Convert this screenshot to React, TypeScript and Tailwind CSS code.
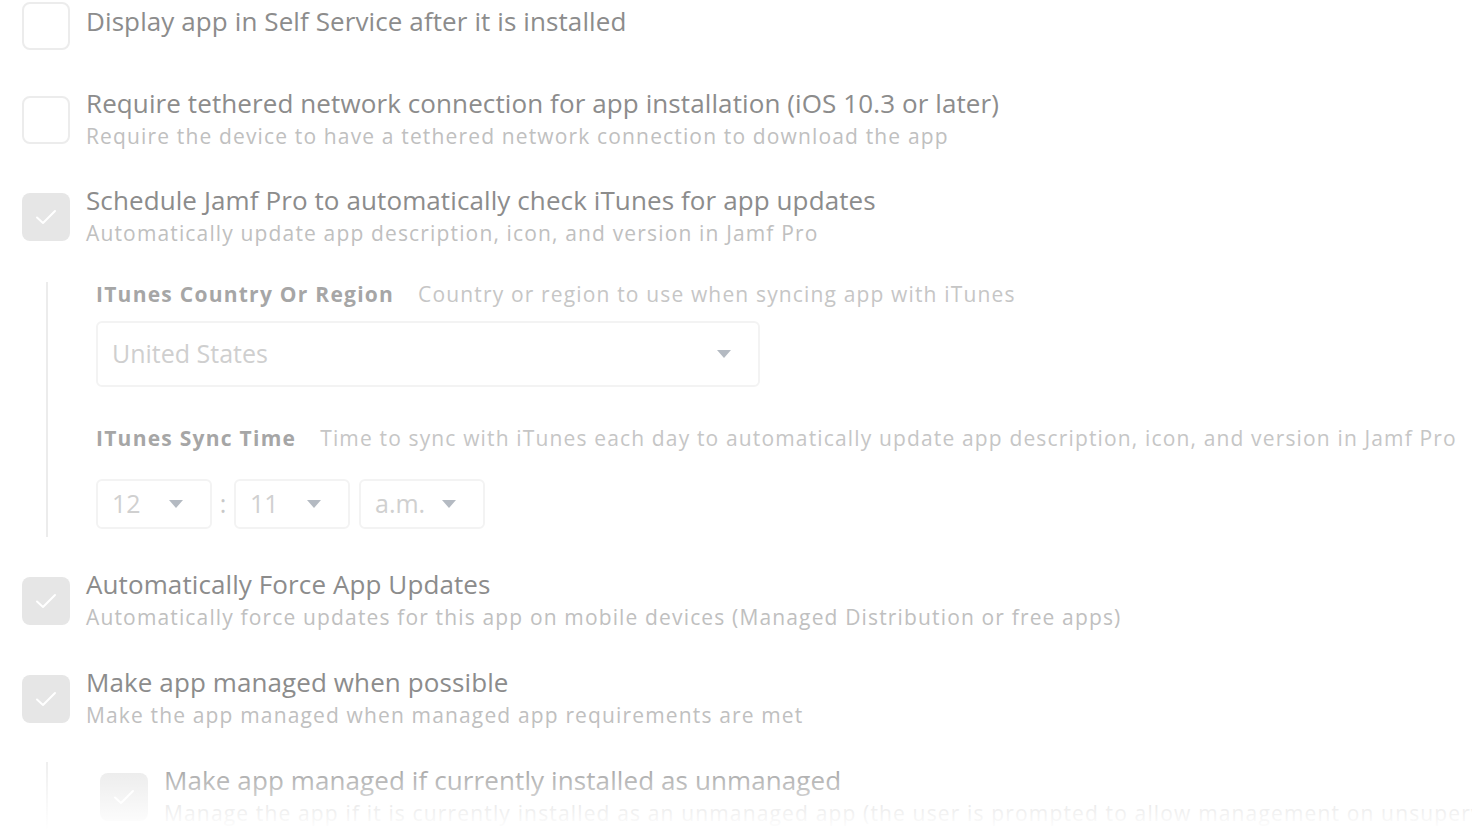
import React from 'react';

const font = { fontFamily: '"Open Sans", "Noto Sans", sans-serif' };

const Check: React.FC<{ checked?: boolean }> = ({ checked }) => (
    <div
        className={`w-12 h-12 shrink-0 rounded-lg flex items-center justify-center ${
            checked ? 'bg-[#e6e6e6]' : 'border-2 border-[#ececec] bg-white'
        }`}
    >
        {checked && (
            <svg width="22" height="16" viewBox="0 0 22 16" fill="none">
                <path d="M2 8.5 L8 14 L20 2" stroke="#ffffff" strokeWidth="2" strokeLinecap="round" strokeLinejoin="round" />
            </svg>
        )}
    </div>
);

const Option: React.FC<{ title: string; desc?: string; checked?: boolean; className?: string; textClass?: string }> = ({
    title,
    desc,
    checked,
    className,
    textClass,
}) => (
    <div className={`flex gap-4 ${className ?? 'items-center'}`}>
        <Check checked={checked} />
        <div className={textClass}>
            <div className="text-[26px] leading-[33px] tracking-[0.1px] text-[#8c8c8c]">{title}</div>
            {desc && <div className="text-[21px] leading-[33px] tracking-[1.15px] text-[#c0c0c0]">{desc}</div>}
        </div>
    </div>
);

const Caret = () => (
    <svg width="16" height="10" viewBox="0 0 16 10">
        <path d="M1 1 H15 L8 9 Z" fill="#b4bac2" />
    </svg>
);

const TimeSelect: React.FC<{ value: string; w: string }> = ({ value, w }) => (
    <div className={`${w} h-[50px] rounded-md border-2 border-[#f3f3f3] flex items-center justify-between pl-[14px] pr-[26px]`}>
        <span className="text-[25px] text-[#d0d0d0]">{value}</span>
        <Caret />
    </div>
);

export default function App() {
    return (
        <div className="relative w-[1472px] h-[830px] overflow-hidden bg-white" style={font}>
            <div className="pl-[22px]">
                <Option
                    title="Display app in Self Service after it is installed"
                    className="items-start pt-[2px]"
                    textClass="pt-[3px]"
                />
                <Option
                    className="items-center mt-[37px]"
                    title="Require tethered network connection for app installation (iOS 10.3 or later)"
                    desc="Require the device to have a tethered network connection to download the app"
                />
                <Option
                    className="items-center mt-[31px]"
                    checked
                    title="Schedule Jamf Pro to automatically check iTunes for app updates"
                    desc="Automatically update app description, icon, and version in Jamf Pro"
                />

                <div className="mt-[32px] ml-[24px] border-l-2 border-[#ececec] pl-[48px] pb-2">
                    <div className="flex items-baseline gap-6 leading-[24px]">
                        <span className="text-[21px] font-bold text-[#a6a6a6] tracking-[1.25px]">ITunes Country Or Region</span>
                        <span className="text-[21px] text-[#c6c6c6] tracking-[1.15px]">Country or region to use when syncing app with iTunes</span>
                    </div>
                    <div className="mt-[15px] w-[664px] h-[66px] rounded-md border-2 border-[#f3f3f3] flex items-center justify-between pl-[14px] pr-[26px]">
                        <span className="text-[25px] text-[#cfcfcf]">United States</span>
                        <Caret />
                    </div>
                    <div className="mt-[39px] flex items-baseline gap-6 leading-[24px]">
                        <span className="text-[21px] font-bold text-[#a6a6a6] tracking-[1.25px]">ITunes Sync Time</span>
                        <span className="text-[21px] text-[#c6c6c6] tracking-[1.15px] whitespace-nowrap">
                            Time to sync with iTunes each day to automatically update app description, icon, and version in Jamf Pro
                        </span>
                    </div>
                    <div className="mt-[29px] flex items-center">
                        <TimeSelect value="12" w="w-[116px]" />
                        <span className="w-[22px] text-center text-[25px] text-[#c8c8c8]">:</span>
                        <TimeSelect value="11" w="w-[116px]" />
                        <div className="w-[9px]" />
                        <TimeSelect value="a.m." w="w-[126px]" />
                    </div>
                </div>

                <Option
                    className="items-center mt-[31px]"
                    checked
                    title="Automatically Force App Updates"
                    desc="Automatically force updates for this app on mobile devices (Managed Distribution or free apps)"
                />
                <Option
                    className="items-center mt-[32px]"
                    checked
                    title="Make app managed when possible"
                    desc="Make the app managed when managed app requirements are met"
                />
                <div className="mt-[30px] ml-[24px] border-l-2 border-[#ececec] pl-[52px] pt-[2px]">
                    <Option
                        checked
                        title="Make app managed if currently installed as unmanaged"
                        desc="Manage the app if it is currently installed as an unmanaged app (the user is prompted to allow management on unsupervised devices)"
                        className="items-center whitespace-nowrap"
                    />
                </div>
            </div>
            <div className="absolute left-0 right-0 bottom-0 h-[80px] bg-gradient-to-b from-white/0 to-white" />
        </div>
    );
}
